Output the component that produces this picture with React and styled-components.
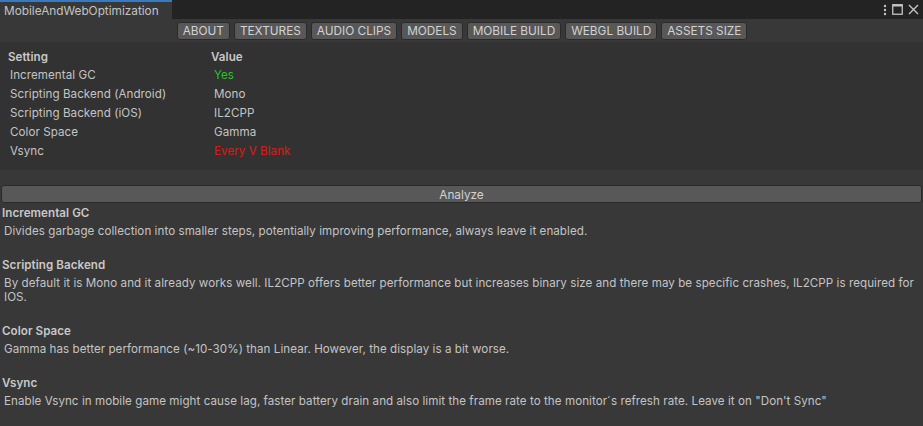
import React from 'react'
import styled, { createGlobalStyle } from 'styled-components'

const Global = createGlobalStyle`
  html, body { margin: 0; padding: 0; background: #383838; }
  body { font-family: Inter, "Noto Sans", sans-serif; font-size: 11.6px; letter-spacing: 0.06px; color: #c4c4c4; }
  * { box-sizing: border-box; }
`

const Window = styled.div`
  width: 923px;
  height: 426px;
  background: #383838;
  display: flex;
  flex-direction: column;
  overflow: hidden;
`

const TabBar = styled.div`
  height: 19px;
  background: #232323;
  display: flex;
  align-items: stretch;
  justify-content: space-between;
`

const Tab = styled.div`
  width: 172px;
  background: #383838;
  border-top: 2px solid #3a79bb;
  padding: 0 0 0 4px;
  display: flex;
  align-items: center;
  font-size: 11.8px;
  letter-spacing: 0;
  color: #c4c4c4;
`

const TabIcons = styled.div`
  display: flex;
  align-items: center;
  gap: 5px;
  padding-right: 4px;
  color: #c4c4c4;
`

const Toolbar = styled.div`
  display: flex;
  justify-content: center;
  gap: 4px;
  padding: 3px 0 0 1px;
  height: 22px;
`

const ToolButton = styled.button`
  height: 18px;
  padding: 0 5px;
  background: #585858;
  border: 1px solid #2a2a2a;
  border-radius: 3px;
  color: #d2d2d2;
  font-family: Inter, "Noto Sans", sans-serif;
  font-size: 11.8px;
  line-height: 16px;
`

const Panel = styled.div`
  margin-top: 1px;
  background: #323232;
  padding: 6px 0 12px;
  height: 128px;
`

const Row = styled.div`
  display: grid;
  grid-template-columns: ${p => (p.$head ? '203px 1fr' : '204px 1fr')};
  padding-left: ${p => (p.$head ? '8px' : '10px')};
  height: ${p => (p.$head ? '17px' : '19px')};
  align-items: center;
  font-weight: ${p => (p.$head ? 600 : 400)};
  color: ${p => (p.$head ? '#c8c8c8' : '#c4c4c4')};
`

const Value = styled.span`
  color: ${p => p.$tone === 'good' ? '#24c424' : p.$tone === 'bad' ? '#e01818' : '#c4c4c4'};
`

const AnalyzeButton = styled.button`
  margin: 15px 1px 0;
  height: 18px;
  background: #585858;
  border: 1px solid #2a2a2a;
  border-radius: 3px;
  color: #d2d2d2;
  font-family: Inter, "Noto Sans", sans-serif;
  font-size: 11.8px;
  line-height: 16px;
`

const Notes = styled.div`
  padding: 2px 0 0 2px;
  display: flex;
  flex-direction: column;
  gap: 19px;
`

const Note = styled.div`
  display: flex;
  flex-direction: column;
`

const NoteTitle = styled.div`
  font-weight: 600;
  line-height: 16px;
  color: #c8c8c8;
`

const NoteText = styled.div`
  padding-left: 2px;
  line-height: 14px;
  margin-top: 3px;
  color: #c4c4c4;
`

const settings = [
  ['Incremental GC', 'Yes', 'good'],
  ['Scripting Backend (Android)', 'Mono'],
  ['Scripting Backend (iOS)', 'IL2CPP'],
  ['Color Space', 'Gamma'],
  ['Vsync', 'Every V Blank', 'bad'],
]

const notes = [
  ['Incremental GC', 'Divides garbage collection into smaller steps, potentially improving performance, always leave it enabled.'],
  ['Scripting Backend', 'By default it is Mono and it already works well. IL2CPP offers better performance but increases binary size and there may be specific crashes, IL2CPP is required for IOS.'],
  ['Color Space', 'Gamma has better performance (~10-30%) than Linear. However, the display is a bit worse.'],
  ['Vsync', 'Enable Vsync in mobile game might cause lag, faster battery drain and also limit the frame rate to the monitor\u00b4s refresh rate. Leave it on "Don\'t Sync"'],
]

const tabs = ['ABOUT', 'TEXTURES', 'AUDIO CLIPS', 'MODELS', 'MOBILE BUILD', 'WEBGL BUILD', 'ASSETS SIZE']

export default function App() {
  return (
    <Window>
      <Global />
      <TabBar>
        <Tab>MobileAndWebOptimization</Tab>
        <TabIcons>
          <svg width="4" height="12" viewBox="0 0 4 12"><circle cx="2" cy="2" r="1.2" fill="#c4c4c4" /><circle cx="2" cy="6" r="1.2" fill="#c4c4c4" /><circle cx="2" cy="10" r="1.2" fill="#c4c4c4" /></svg>
          <svg width="11" height="11" viewBox="0 0 11 11"><rect x="0.75" y="0.75" width="9.5" height="9.5" fill="none" stroke="#c4c4c4" strokeWidth="1.3" /><rect x="0.5" y="0.5" width="10" height="2" fill="#c4c4c4" /></svg>
          <svg width="11" height="11" viewBox="0 0 11 11"><path d="M1 1 L10 10 M10 1 L1 10" stroke="#c4c4c4" strokeWidth="1.4" /></svg>
        </TabIcons>
      </TabBar>
      <Toolbar>
        {tabs.map(t => <ToolButton key={t}>{t}</ToolButton>)}
      </Toolbar>
      <Panel>
        <Row $head><span>Setting</span><span>Value</span></Row>
        {settings.map(([k, v, tone]) => (
          <Row key={k}><span>{k}</span><Value $tone={tone}>{v}</Value></Row>
        ))}
      </Panel>
      <AnalyzeButton>Analyze</AnalyzeButton>
      <Notes>
        {notes.map(([t, d]) => (
          <Note key={t}>
            <NoteTitle>{t}</NoteTitle>
            <NoteText>{d}</NoteText>
          </Note>
        ))}
      </Notes>
    </Window>
  )
}
